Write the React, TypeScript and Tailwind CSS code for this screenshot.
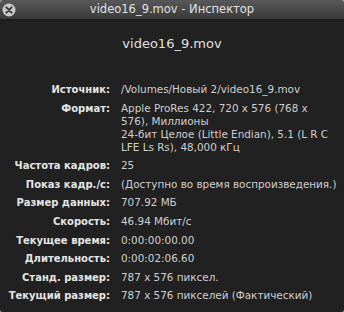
import React from "react";

const rows: { label: string; value: React.ReactNode }[] = [
  { label: "Источник:", value: "/Volumes/Новый 2/video16_9.mov" },
  {
    label: "Формат:",
    value: (
      <>
        Apple ProRes 422, 720 x 576 (768 x<br />
        576), Миллионы<br />
        24-бит Целое (Little Endian), 5.1 (L R C<br />
        LFE Ls Rs), 48,000 кГц
      </>
    ),
  },
  { label: "Частота кадров:", value: "25" },
  { label: "Показ кадр./с:", value: "(Доступно во время воспроизведения.)" },
  { label: "Размер данных:", value: "707.92 МБ" },
  { label: "Скорость:", value: "46.94 Мбит/с" },
  { label: "Текущее время:", value: "0:00:00:00.00" },
  { label: "Длительность:", value: "0:00:02:06.60" },
  { label: "Станд. размер:", value: "787 x 576 пиксел." },
  { label: "Текущий размер:", value: "787 x 576 пикселей (Фактический)" },
];

function CloseButton() {
  return (
    <svg width="14" height="14" viewBox="0 0 14 14" aria-hidden="true">
      <circle cx="7" cy="7" r="6.5" fill="#c9c9c9" />
      <path d="M4.4 4.4 L9.6 9.6 M9.6 4.4 L4.4 9.6" stroke="#3a3a3a" strokeWidth="2" strokeLinecap="round" />
    </svg>
  );
}

export default function App() {
  return (
    <div className="w-[344px] h-[312px] bg-[#8a8a8a] font-['DejaVu_Sans',sans-serif]">
      <div className="w-full h-full rounded-t-[5px] rounded-b-[3px] overflow-hidden bg-[#212121] flex flex-col">
        {/* Title bar */}
        <div className="h-[20px] shrink-0 relative flex items-center justify-center bg-gradient-to-b from-[#585858] to-[#3b3b3b] border-b border-[#1a1a1a]">
          <div className="absolute left-[2px] top-[3px]">
            <CloseButton />
          </div>
          <span className="text-[11.5px] text-[#e2e2e2] leading-none">video16_9.mov - Инспектор</span>
        </div>

        {/* File name */}
        <div className="pt-[15px] text-center text-[13px] text-[#e0e0e0] leading-[18px]">video16_9.mov</div>

        {/* Properties */}
        <div className="mt-[30px] flex flex-col gap-[5.6px] text-[10.4px] leading-[13px]">
          {rows.map((r) => (
            <div key={r.label} className="flex">
              <div className="w-[110px] shrink-0 text-right font-bold text-[10px] text-[#e4e4e4] whitespace-nowrap">{r.label}</div>
              <div className="pl-[11px] text-[#cfcfcf] whitespace-nowrap">{r.value}</div>
            </div>
          ))}
        </div>
      </div>
    </div>
  );
}
